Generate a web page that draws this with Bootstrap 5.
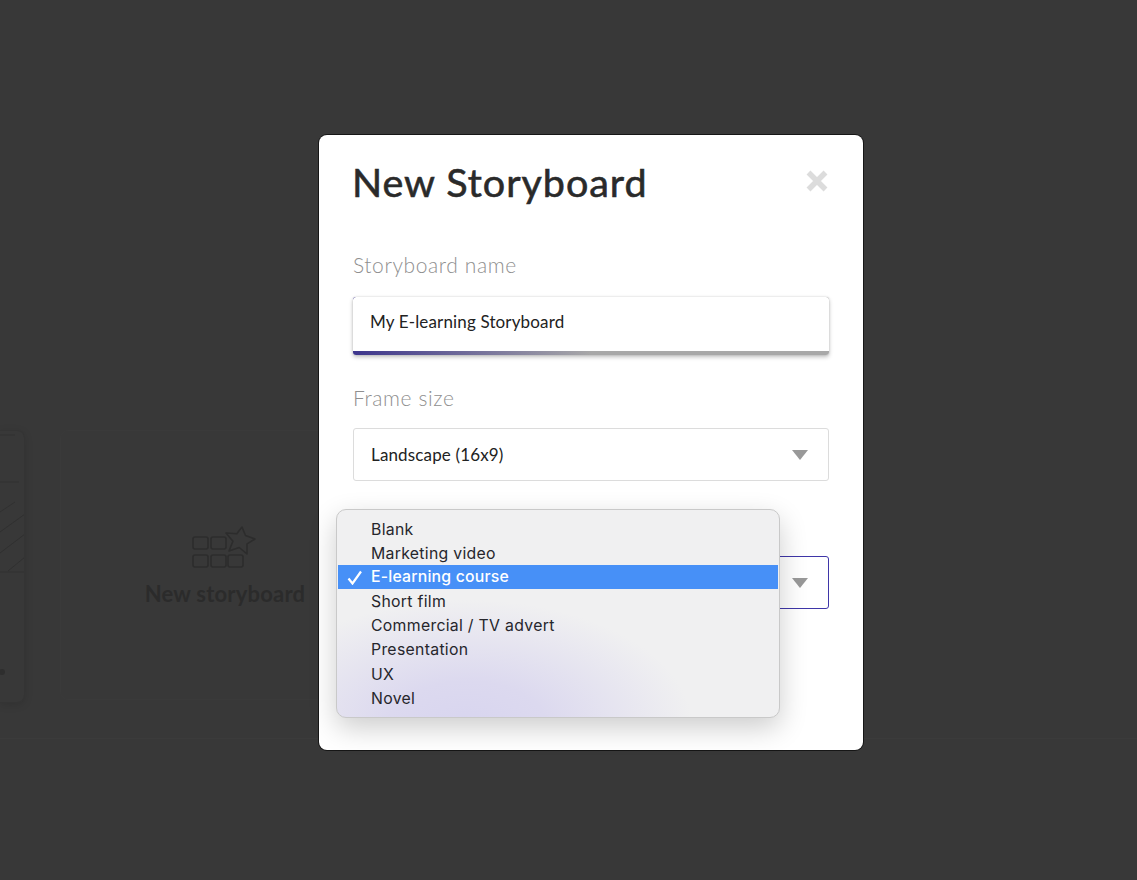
<!DOCTYPE html>
<html lang="en">
<head>
<meta charset="utf-8">
<title>New Storyboard</title>
<link href="https://cdn.jsdelivr.net/npm/bootstrap@5.3.0/dist/css/bootstrap.min.css" rel="stylesheet">
<style>
html,body{height:100%;}
body{background:#383838;font-family:"Lato","Liberation Sans",sans-serif;overflow:hidden;}
.page-back{height:880px;padding-top:430px;}
.back-row{height:273px;}
.thumb-card{width:25px;height:273px;border:1px solid #343434;border-left:0;border-radius:0 8px 8px 0;box-shadow:0 2px 8px rgba(0,0,0,.12);overflow:hidden;flex:none;}
.thumb-art{display:block;}
.new-card{width:330px;height:270px;margin-left:35px;flex:none;border:1px solid #3a3a3a;border-radius:8px;padding-top:95px;color:#2b2b2b;}
.new-label{font-size:22px;font-weight:700;line-height:30px;letter-spacing:.2px;margin-top:11px;}
.back-rule{height:1px;background:#3b3b3b;margin-top:35px;}
.overlay{position:absolute;inset:0;padding:135px 0 0 319px;}
.sheet.modal-content{width:544px;height:615px;border:0;border-radius:8px;background:#fff;box-shadow:0 0 0 1px #161616;padding:0 34px 0 34px;position:relative;}
.sheet-head{height:93px;padding-top:22px;}
.sheet-title{font-size:39.500px;line-height:50px;font-weight:400;color:#2a2a2a;margin:0 0 0 -1px;letter-spacing:.95px;-webkit-text-stroke:.6px #2a2a2a;}
.sheet-close{width:24px;height:24px;padding:0;border:0;background:none;margin-top:10px;margin-right:0;}
.field-label{display:block;font-size:21px;font-weight:300;line-height:28px;color:#8f8f8f;margin:23px 0 18px;letter-spacing:.6px;}
.name-wrap{height:58px;border-radius:3px;box-shadow:0 2px 4px rgba(0,0,0,.25),0 0 2px rgba(0,0,0,.15);overflow:hidden;background:linear-gradient(90deg,#3d358c 0%,#a8a8a8 50%,#a8a8a8 100%);padding-bottom:4px;}
.name-input.form-control{height:54px;border:0;border-radius:3px 3px 0 0;padding:0 17px 5px;font-size:17px;color:#222;box-shadow:none;letter-spacing:.15px;}
.pick.form-select{width:476px;height:53px;border:1px solid #dcdcdc;border-radius:3px;padding:0 17px;font-size:17px;color:#222;letter-spacing:.15px;background-color:#fff;background-position:right 20px center;background-size:16px 10px;background-image:url("data:image/svg+xml,%3csvg xmlns='http://www.w3.org/2000/svg' viewBox='0 0 16 10'%3e%3cpath fill='%23999' d='M0 0h16l-8 10z'/%3e%3c/svg%3e");box-shadow:none;}
.field-label.pick-gap{margin-top:29px;margin-bottom:16px;}
.type-gap{height:75px;}
.pick.is-open{border-color:#3f36a8;}
.pick-holder{position:relative;}
.os-menu.dropdown-menu{position:absolute;display:block;left:-17px;top:-47px;width:444px;height:209px;padding:8px 1px 0;border:1px solid #c9c9c9;border-radius:10px;font-family:"Inter","Liberation Sans",sans-serif;box-shadow:0 10px 28px rgba(0,0,0,.2);background:radial-gradient(ellipse 225px 125px at 130px 215px,#d8d5ef 0%,#dcd9ef 35%,rgba(240,240,241,0) 100%),#f0f0f1;overflow:hidden;}
.os-menu .dropdown-item{height:24.25px;line-height:24px;padding:0 0 0 33px;font-size:15.800px;letter-spacing:.3px;color:#26262c;position:relative;}
.os-menu .dropdown-item.lead-item{height:23.500px;}
.os-menu .dropdown-item.active{background:#4790f7;color:#fff;font-weight:500;height:24px;letter-spacing:.2px;margin-bottom:.75px;}
.tick{position:absolute;left:9px;top:5px;}
</style>
</head>
<body class="position-relative">
<div class="page-back">
  <div class="d-flex back-row">
    <div class="thumb-card">
      <svg class="thumb-art" width="25" height="273" viewBox="0 0 25 273" fill="none" stroke="#303030" stroke-width="1">
        <path d="M0 4h15M0 51h19M0 81l15-10M0 101l25-18M0 122l25-19M8 140l17-14M0 141h25"/>
        <circle cx="2" cy="241" r="3" fill="#2e2e2e" stroke="none"/>
      </svg>
    </div>
    <div class="new-card d-flex flex-column align-items-center">
      <svg width="66" height="42" viewBox="0 0 66 42" fill="none" stroke="#2c2c2c" stroke-width="1.600" stroke-linejoin="round">
        <rect x="1" y="11" width="15" height="12" rx="2"/><rect x="19" y="11" width="15" height="12" rx="2"/>
        <rect x="1" y="29" width="15" height="12" rx="2"/><rect x="19" y="29" width="15" height="12" rx="2"/><rect x="36" y="29" width="15" height="12" rx="2"/>
        <path d="M50 1L53.500 9.500 63 13 55 17.900 55 28 47.200 21.500 37 25 40.900 15.200 34 7 44.800 7.700z"/>
      </svg>
      <div class="new-label">New storyboard</div>
    </div>
  </div>
  <div class="back-rule"></div>
</div>

<div class="overlay d-flex justify-content-start align-items-start">
  <div class="modal-content sheet">
    <div class="sheet-head d-flex justify-content-between align-items-start">
      <h1 class="sheet-title">New Storyboard</h1>
      <button class="sheet-close" type="button" aria-label="Close">
        <svg width="24" height="24" viewBox="0 0 24 24"><path d="M3.500 3.500l17 17M20.500 3.500l-17 17" stroke="#dcdcdc" stroke-width="5.500" fill="none"/></svg>
      </button>
    </div>
    <label class="field-label" for="sbname">Storyboard name</label>
    <div class="name-wrap"><input id="sbname" class="form-control name-input" type="text" value="My E-learning Storyboard"></div>
    <label class="field-label pick-gap" for="sbframe">Frame size</label>
    <select id="sbframe" class="form-select pick"><option>Landscape (16x9)</option></select>
    <div class="type-gap"></div>
    <div class="pick-holder">
      <select class="form-select pick is-open" aria-label="Storyboard type"><option>E-learning course</option></select>
      <div class="dropdown-menu os-menu">
        <a class="dropdown-item lead-item" href="#">Blank</a>
        <a class="dropdown-item lead-item" href="#">Marketing video</a>
        <a class="dropdown-item active" href="#"><svg class="tick" width="16" height="15" viewBox="0 0 16 15"><path d="M1.500 8.500l4 5L14 1.500" fill="none" stroke="#fff" stroke-width="2.200"/></svg>E-learning course</a>
        <a class="dropdown-item" href="#">Short film</a>
        <a class="dropdown-item" href="#">Commercial / TV advert</a>
        <a class="dropdown-item" href="#">Presentation</a>
        <a class="dropdown-item" href="#">UX</a>
        <a class="dropdown-item" href="#">Novel</a>
      </div>
    </div>
  </div>
</div>
<script src="https://cdn.jsdelivr.net/npm/bootstrap@5.3.0/dist/js/bootstrap.bundle.min.js"></script>
</body>
</html>
